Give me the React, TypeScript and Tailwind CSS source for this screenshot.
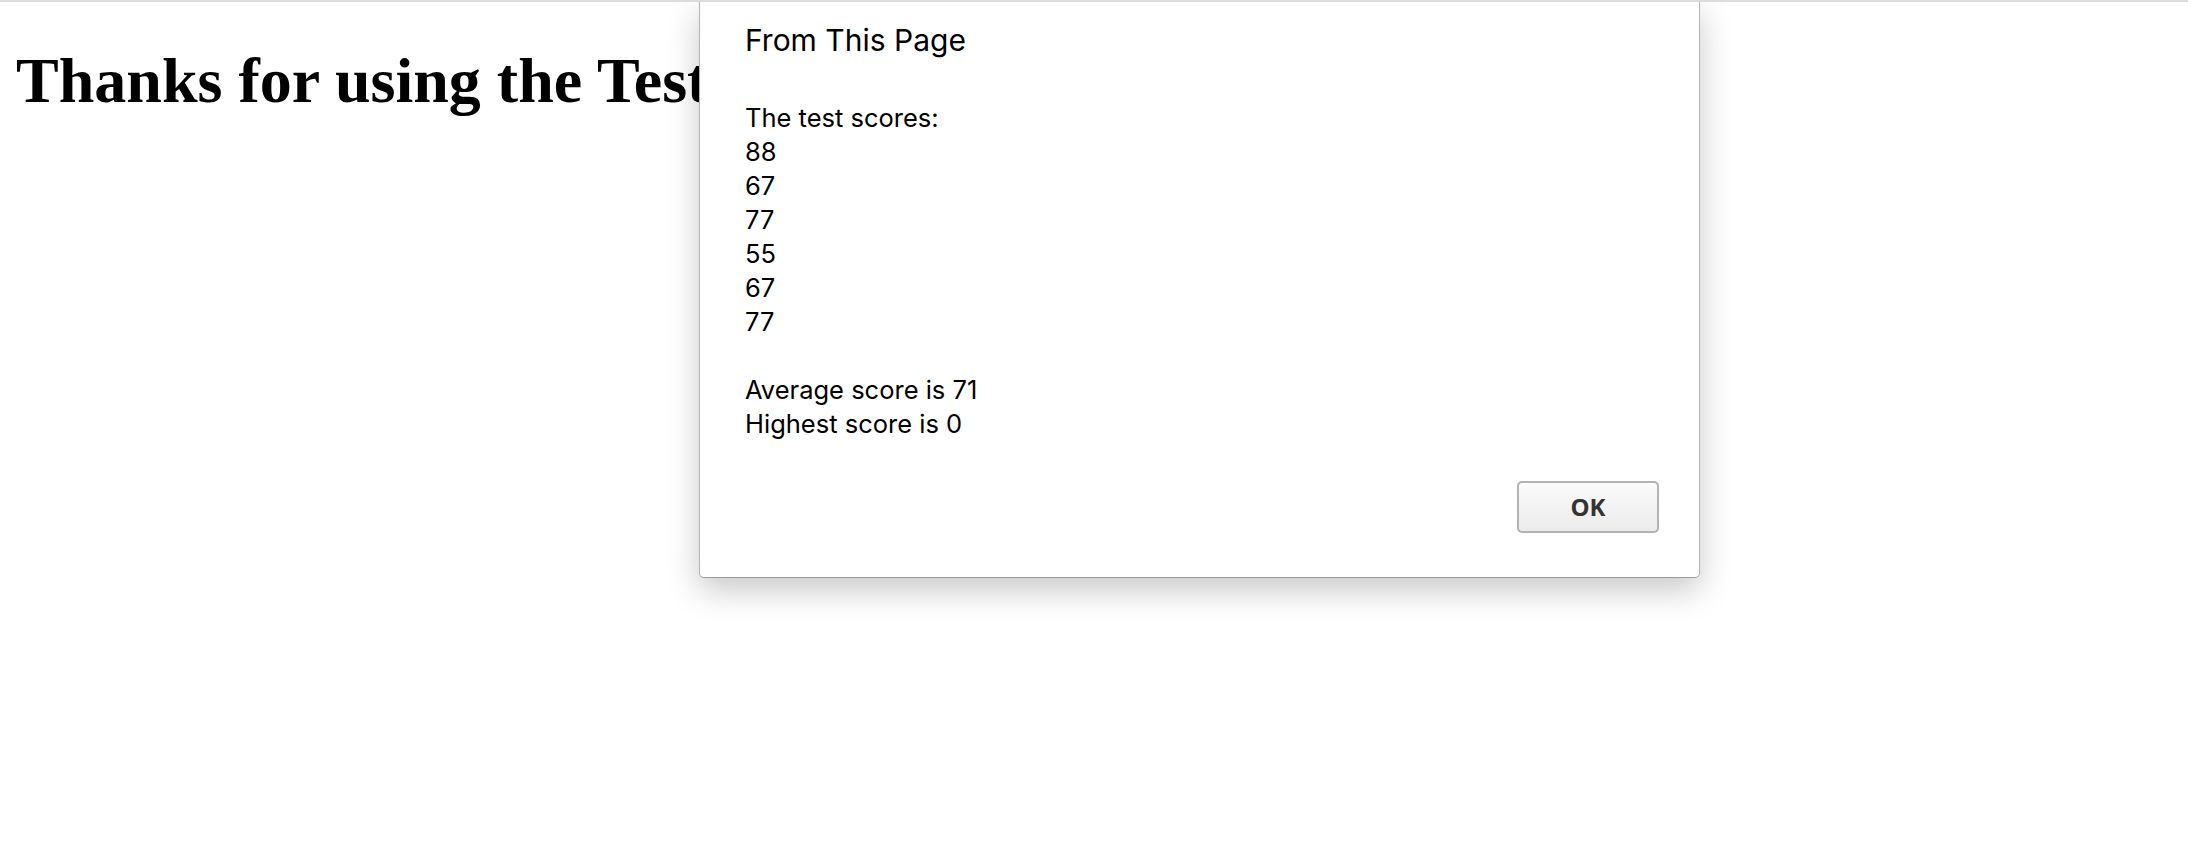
import React from 'react';

const scores = [88, 67, 77, 55, 67, 77];

const AlertDialog = () => {
  return (
    <div className="absolute left-[699px] top-0 w-[1001px] h-[576px] bg-white border border-t-0 border-[#b4b4b4] border-b-[#9a9a9a] rounded-b-[5px] shadow-[0_12px_32px_rgba(0,0,0,0.22)] flex flex-col pl-[45px] pr-[40px] pt-[18px] font-['Inter',sans-serif] text-black">
      {/* Title */}
      <div className="text-[30px] leading-[40px]">From This Page</div>

      {/* Message */}
      <div className="mt-[41px] text-[25.5px] leading-[34px]">
        <div>The test scores:</div>
        {scores.map((s, i) => (
          <div key={i}>{s}</div>
        ))}
        <div className="h-[34px]" />
        <div>Average score is 71</div>
        <div>Highest score is 0</div>
      </div>

      {/* Actions */}
      <div className="flex justify-end mt-[40px]">
        <button className="w-[142px] h-[52px] rounded-[5px] border-2 border-[#b3b3b3] bg-gradient-to-b from-[#fbfbfb] to-[#ebebeb] text-[#333] font-bold text-[24px] font-['Open_Sans',sans-serif]">
          OK
        </button>
      </div>
    </div>
  );
};

export default function App() {
  return (
    <div className="relative w-[2188px] h-[852px] bg-white border-t-2 border-[#dcdcdc] overflow-hidden">
      <h1 className="ml-4 mt-[41px] text-[64px] leading-[75px] font-bold font-['Liberation_Serif',serif] text-black whitespace-nowrap">
        Thanks for using the Test Score Calculator
      </h1>
      <AlertDialog />
    </div>
  );
}
